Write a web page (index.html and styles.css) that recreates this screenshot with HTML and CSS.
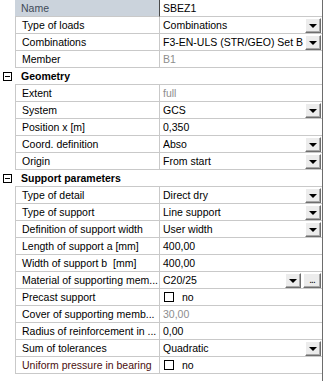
FILE: index.html
```html
<!DOCTYPE html>
<html lang="en">
<head>
    <meta charset="UTF-8">
    <title>Properties</title>
    <link rel="stylesheet" href="styles.css">
</head>
<body>
    <div class="grid">
        <div class="row head">
            <div class="gutter"></div>
            <div class="label">Name</div>
            <div class="value">SBEZ1</div>
        </div>
        <div class="row">
            <div class="gutter"></div>
            <div class="label">Type of loads</div>
            <div class="value"><span class="txt">Combinations</span><span class="btn drop"></span></div>
        </div>
        <div class="row">
            <div class="gutter"></div>
            <div class="label">Combinations</div>
            <div class="value"><span class="txt">F3-EN-ULS (STR/GEO) Set B</span><span class="btn drop"></span></div>
        </div>
        <div class="row">
            <div class="gutter"></div>
            <div class="label">Member</div>
            <div class="value muted">B1</div>
        </div>
        <div class="row group">
            <div class="gutter"><span class="toggle"></span></div>
            <div class="label">Geometry</div>
        </div>
        <div class="row">
            <div class="gutter"></div>
            <div class="label">Extent</div>
            <div class="value muted">full</div>
        </div>
        <div class="row">
            <div class="gutter"></div>
            <div class="label">System</div>
            <div class="value"><span class="txt">GCS</span><span class="btn drop"></span></div>
        </div>
        <div class="row">
            <div class="gutter"></div>
            <div class="label">Position x [m]</div>
            <div class="value">0,350</div>
        </div>
        <div class="row">
            <div class="gutter"></div>
            <div class="label">Coord. definition</div>
            <div class="value"><span class="txt">Abso</span><span class="btn drop"></span></div>
        </div>
        <div class="row">
            <div class="gutter"></div>
            <div class="label">Origin</div>
            <div class="value"><span class="txt">From start</span><span class="btn drop"></span></div>
        </div>
        <div class="row group">
            <div class="gutter"><span class="toggle"></span></div>
            <div class="label">Support parameters</div>
        </div>
        <div class="row">
            <div class="gutter"></div>
            <div class="label">Type of detail</div>
            <div class="value"><span class="txt">Direct dry</span><span class="btn drop"></span></div>
        </div>
        <div class="row">
            <div class="gutter"></div>
            <div class="label">Type of support</div>
            <div class="value"><span class="txt">Line support</span><span class="btn drop"></span></div>
        </div>
        <div class="row">
            <div class="gutter"></div>
            <div class="label">Definition of support width</div>
            <div class="value"><span class="txt">User width</span><span class="btn drop"></span></div>
        </div>
        <div class="row">
            <div class="gutter"></div>
            <div class="label">Length of support a [mm]</div>
            <div class="value">400,00</div>
        </div>
        <div class="row">
            <div class="gutter"></div>
            <div class="label">Width of support b&nbsp; [mm]</div>
            <div class="value">400,00</div>
        </div>
        <div class="row">
            <div class="gutter"></div>
            <div class="label">Material of supporting mem...</div>
            <div class="value"><span class="txt">C20/25</span><span class="btn drop"></span><span class="btn dots">...</span></div>
        </div>
        <div class="row">
            <div class="gutter"></div>
            <div class="label">Precast support</div>
            <div class="value"><span class="check"></span>no</div>
        </div>
        <div class="row">
            <div class="gutter"></div>
            <div class="label">Cover of supporting memb...</div>
            <div class="value muted">30,00</div>
        </div>
        <div class="row">
            <div class="gutter"></div>
            <div class="label">Radius of reinforcement in ...</div>
            <div class="value">0,00</div>
        </div>
        <div class="row">
            <div class="gutter"></div>
            <div class="label">Sum of tolerances</div>
            <div class="value"><span class="txt">Quadratic</span><span class="btn drop"></span></div>
        </div>
        <div class="row">
            <div class="gutter"></div>
            <div class="label warn">Uniform pressure in bearing</div>
            <div class="value"><span class="check"></span>no</div>
        </div>
    </div>
</body>
</html>
```

FILE: styles.css
```css
* {
    margin: 0;
    padding: 0;
    box-sizing: border-box;
}

body {
    background-color: #ffffff;
    font-family: "Liberation Sans", Arial, sans-serif;
    font-size: 10.5px;
    color: #000000;
}

.grid {
    width: 323px;
    min-height: 100vh;
    border-right: 1px solid #6d6d6d;
}

.row {
    display: grid;
    grid-template-columns: 15px 145px 1fr;
    height: 17px;
}

.row .label,
.row .value {
    display: flex;
    align-items: center;
    white-space: nowrap;
    overflow: hidden;
    border-bottom: 1px solid #c9c9c9;
}

.row .label {
    padding-left: 6px;
    border-left: 1px solid #c9c9c9;
    border-right: 1px solid #c9c9c9;
}

.row .value {
    padding-left: 3px;
    padding-right: 1px;
}

/* first row, selected look */
.row.head .label {
    background-color: #cbd3dc;
    color: #3f4b58;
    border-right: 1px solid #4a4a4a;
    border-left: none;
}

.row.group {
    grid-template-columns: 15px 1fr;
}

.row.group .label {
    font-weight: bold;
    border-left: none;
    border-right: none;
}

.gutter {
    display: flex;
    align-items: center;
    justify-content: center;
}

.toggle {
    position: relative;
    width: 9px;
    height: 9px;
    border: 1px solid #000000;
    margin-left: -1px;
}

.toggle::after {
    content: "";
    position: absolute;
    left: 1px;
    top: 3px;
    width: 5px;
    height: 1px;
    background-color: #000000;
}

.muted {
    color: #8d8d8d;
}

.warn {
    color: #4a0e0e;
}

.txt {
    flex: 1;
    overflow: hidden;
}

.btn {
    position: relative;
    width: 16px;
    height: 15px;
    flex: none;
    background-color: #ececec;
    border: 1px solid;
    border-color: #ffffff #6e6e6e #6e6e6e #ffffff;
    box-shadow: inset -1px -1px 0 #a8a8a8;
}

.btn.drop::after {
    content: "";
    position: absolute;
    left: 3px;
    top: 5px;
    border-left: 4px solid transparent;
    border-right: 4px solid transparent;
    border-top: 4px solid #000000;
}

.btn.dots {
    width: 18px;
    margin-left: 2px;
    font-size: 10px;
    line-height: 11px;
    text-align: center;
    letter-spacing: -1px;
}

.check {
    width: 10px;
    height: 10px;
    border: 1px solid #000000;
    margin: 0 8px 0 1px;
}
```
